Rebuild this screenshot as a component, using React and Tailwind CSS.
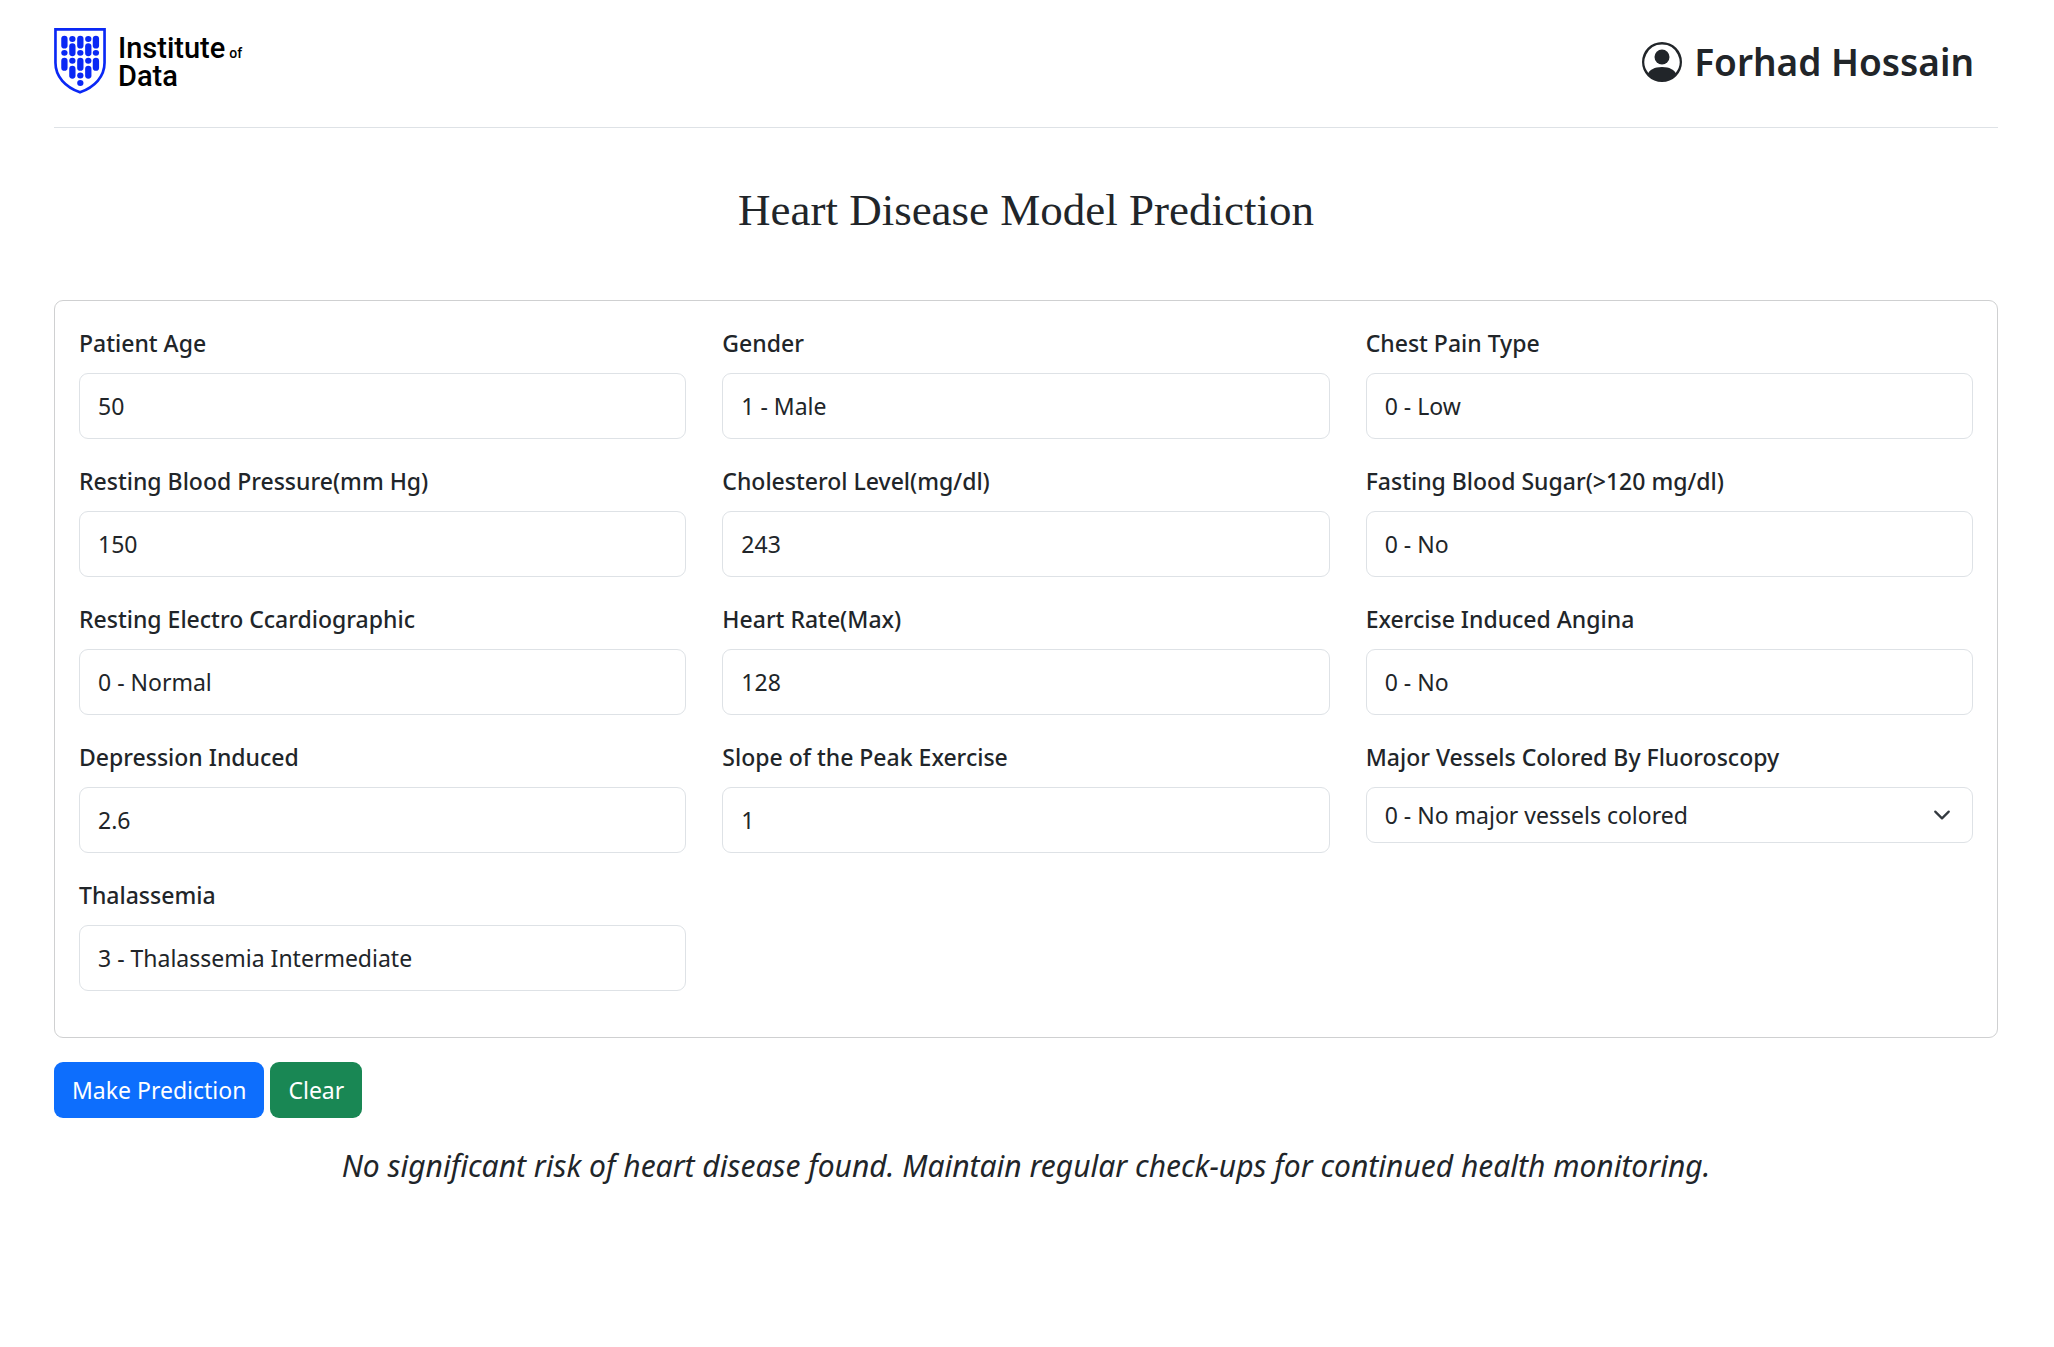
const fields = [
  { id: "age", label: "Patient Age", value: "50" },
  { id: "gender", label: "Gender", value: "1 - Male" },
  { id: "chest-pain", label: "Chest Pain Type", value: "0 - Low" },
  { id: "blood-pressure", label: "Resting Blood Pressure(mm Hg)", value: "150" },
  { id: "cholesterol", label: "Cholesterol Level(mg/dl)", value: "243" },
  { id: "blood-sugar", label: "Fasting Blood Sugar(>120 mg/dl)", value: "0 - No" },
  { id: "ecg", label: "Resting Electro Ccardiographic", value: "0 - Normal" },
  { id: "heart-rate", label: "Heart Rate(Max)", value: "128" },
  { id: "angina", label: "Exercise Induced Angina", value: "0 - No" },
  { id: "depression", label: "Depression Induced", value: "2.6" },
  { id: "slope", label: "Slope of the Peak Exercise", value: "1" },
  { id: "vessels", label: "Major Vessels Colored By Fluoroscopy", value: "0 - No major vessels colored", select: true },
  { id: "thalassemia", label: "Thalassemia", value: "3 - Thalassemia Intermediate" },
];

// Pills and dots of the shield: [centre x, top, bottom]
const marks = [
  [73, 76, 115], [73, 119, 137], [73, 143, 182],
  [97, 77, 95], [97, 99, 138], [97, 143, 161], [97, 167, 206],
  [121, 76, 115], [121, 119, 137], [121, 143, 182], [121, 187, 205], [121, 210, 228],
  [145, 77, 95], [145, 99, 138], [145, 143, 161], [145, 167, 206],
  [168, 76, 115], [168, 119, 137], [168, 143, 182],
];

function Logo() {
  return (
    <a href="#" className="flex items-start gap-3 text-black">
      <svg className="h-[66px] w-[52px]" viewBox="42 53 156 199" aria-hidden="true">
        <path
          d="M46 57H194V158C194 200 164 231 120 247C76 231 46 200 46 158Z"
          fill="none"
          stroke="#0a28f5"
          strokeWidth="8"
        />
        {marks.map(([x, top, bottom]) => (
          <rect key={`${x}-${top}`} x={x - 9.5} y={top} width="19" height={bottom - top} rx="9.5" fill="#0a28f5" />
        ))}
      </svg>
      <span className="mt-1.5 font-['Roboto',sans-serif] text-[29px] leading-7 font-medium">
        <span className="flex items-baseline gap-1">
          Institute
          <span className="text-sm leading-4">of</span>
        </span>
        <span className="block">Data</span>
      </span>
    </a>
  );
}

function ProfileIcon() {
  return (
    <svg className="size-10" viewBox="0 0 16 16" fill="currentColor" aria-hidden="true">
      <path d="M11 6a3 3 0 1 1-6 0 3 3 0 0 1 6 0" />
      <path
        fillRule="evenodd"
        d="M0 8a8 8 0 1 1 16 0A8 8 0 0 1 0 8m8-7a7 7 0 0 0-5.468 11.37C3.242 11.226 4.805 10 8 10s4.757 1.225 5.468 2.37A7 7 0 0 0 8 1"
      />
    </svg>
  );
}

function Field({ id, label, value, select }) {
  const box = "w-full rounded-[9px] border border-[#dee2e6] bg-white px-[18px]";
  return (
    <div>
      <label htmlFor={id} className="mb-3 block leading-9 font-medium">
        {label}
      </label>
      {select ? (
        <div className="relative">
          <select id={id} defaultValue={value} className={`${box} h-14 appearance-none`}>
            <option>{value}</option>
          </select>
          <svg
            className="pointer-events-none absolute top-[19px] right-[22px] size-[18px]"
            viewBox="0 0 16 16"
            fill="none"
            stroke="#343a40"
            strokeWidth="2"
            strokeLinecap="round"
            strokeLinejoin="round"
            aria-hidden="true"
          >
            <path d="m2 5 6 6 6-6" />
          </svg>
        </div>
      ) : (
        <input id={id} type="text" defaultValue={value} className={`${box} h-[66px]`} />
      )}
    </div>
  );
}

export default function App() {
  return (
    <div className="min-h-screen bg-white pr-14 pl-[54px] font-['Noto_Sans',sans-serif] text-[23px] text-[#212529]">
      <header className="flex items-start justify-between border-b border-[#dee2e6] pt-7 pb-[31px]">
        <Logo />
        <div className="flex h-[68px] items-center gap-3 pr-6 text-[37px] leading-[68px] font-semibold">
          <ProfileIcon />
          Forhad Hossain
        </div>
      </header>
      <main>
        <h1 className="mt-[54px] mb-[62px] text-center font-['Liberation_Serif',serif] text-[45px] leading-14">
          Heart Disease Model Prediction
        </h1>
        <form onSubmit={(e) => e.preventDefault()}>
          <div className="grid grid-cols-3 gap-x-9 gap-y-6 rounded-[9px] border border-[#cfd0d1] px-6 pt-6 pb-[46px]">
            {fields.map((field) => (
              <Field key={field.id} {...field} />
            ))}
          </div>
          <div className="mt-6 flex gap-1.5">
            <button type="submit" className="h-14 rounded-[9px] bg-[#0d6efd] px-[18px] text-white">
              Make Prediction
            </button>
            <button type="reset" className="h-14 rounded-[9px] bg-[#198754] px-[18px] text-white">
              Clear
            </button>
          </div>
        </form>
        <p className="mt-[26px] text-center text-[30px] leading-11 italic">
          No significant risk of heart disease found. Maintain regular check-ups for continued health monitoring.
        </p>
      </main>
    </div>
  );
}
